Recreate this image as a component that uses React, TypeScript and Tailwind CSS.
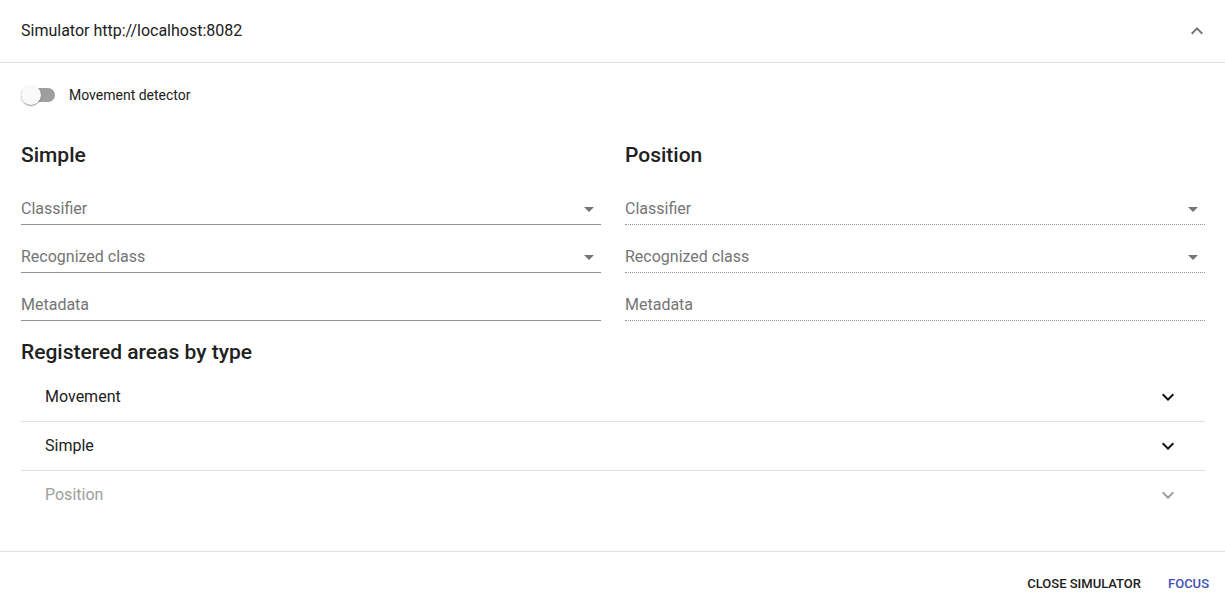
import React from "react";

const ExpandLess = ({ className }: { className?: string }) => (
  <svg viewBox="0 0 24 24" className={className} fill="currentColor">
    <path d="M12 8l-6 6 1.41 1.41L12 10.83l4.59 4.58L18 14z" />
  </svg>
);
const ExpandMore = ({ className }: { className?: string }) => (
  <svg viewBox="0 0 24 24" className={className} fill="currentColor">
    <path d="M16.59 8.59L12 13.17 7.41 8.59 6 10l6 6 6-6z" />
  </svg>
);
const ArrowDrop = ({ className }: { className?: string }) => (
  <svg viewBox="0 0 24 24" className={className} fill="currentColor">
    <path d="M7 10l5 5 5-5z" />
  </svg>
);

function Field({ label, select, disabled }: { label: string; select?: boolean; disabled?: boolean }) {
  return (
    <div className="pt-[16px]">
      <div
        className={`h-[32px] flex items-center justify-between border-b ${
          disabled ? "border-dotted border-[#949494]" : "border-solid border-[#949494]"
        }`}
      >
        <span className="text-[16px] text-[#757575] leading-none">{label}</span>
        {select && <ArrowDrop className="w-6 h-6 text-[#757575]" />}
      </div>
    </div>
  );
}

function Column({ title, disabled }: { title: string; disabled?: boolean }) {
  return (
    <div className="flex flex-col">
      <div className="h-[32px] flex items-center text-[21px] font-medium text-[#212121]">{title}</div>
      <div className="h-[5px]" />
      <Field label="Classifier" select disabled={disabled} />
      <Field label="Recognized class" select disabled={disabled} />
      <Field label="Metadata" disabled={disabled} />
    </div>
  );
}

function AccRow({ label, disabled, last }: { label: string; disabled?: boolean; last?: boolean }) {
  return (
    <div className={`h-[49px] flex items-center justify-between pl-[24px] pr-[25px] pb-[1px] ${last ? "" : "border-b border-[#e0e0e0]"}`}>
      <span className={`text-[16px] ${disabled ? "text-[#9e9e9e]" : "text-[#212121]"}`}>{label}</span>
      <ExpandMore className={`w-6 h-6 ${disabled ? "text-[#9e9e9e]" : "text-[#111]"}`} />
    </div>
  );
}

export default function App() {
  return (
    <div className="w-[1225px] h-[615px] bg-white flex flex-col font-['Roboto','Liberation_Sans',sans-serif] overflow-hidden">
      <div className="h-[63px] flex items-center justify-between pl-[21px] pr-[16px] border-b border-[#e0e0e0] shrink-0">
        <span className="text-[16px] text-[#212121]">Simulator http://localhost:8082</span>
        <ExpandLess className="w-6 h-6 text-[#757575]" />
      </div>
      <div className="pl-[21px] pr-[20px] pt-[13px] pb-[31px] border-b border-[#e0e0e0] flex flex-col">
        <div className="h-[38px] flex items-center">
          <div className="relative w-[34px] h-[20px] flex items-center">
            <div className="w-[34px] h-[14px] rounded-full bg-[#9e9e9e]" />
            <div className="absolute left-0 top-0 w-[20px] h-[20px] rounded-full bg-[#fafafa] shadow-[0_2px_1px_-1px_rgba(0,0,0,0.2),0_1px_1px_0_rgba(0,0,0,0.14),0_1px_3px_0_rgba(0,0,0,0.12)]" />
          </div>
          <span className="ml-[14px] text-[14px] text-[#212121]">Movement detector</span>
        </div>
        <div className="h-[26px]" />
        <div className="grid grid-cols-2 gap-x-[24px]">
          <Column title="Simple" />
          <Column title="Position" disabled />
        </div>
        <div className="h-[16px]" />
        <div className="h-[32px] flex items-center text-[21px] font-medium text-[#212121]">Registered areas by type</div>
        <div className="h-[4px]" />
        <AccRow label="Movement" />
        <AccRow label="Simple" />
        <AccRow label="Position" disabled last />
      </div>
      <div className="flex-1 flex items-center justify-end pr-[16px] gap-[27px] pt-[1px]">
        <span className="text-[13px] font-medium uppercase text-[#212121]">Close simulator</span>
        <span className="text-[13px] font-medium uppercase text-[#3f51b5]">Focus</span>
      </div>
    </div>
  );
}
